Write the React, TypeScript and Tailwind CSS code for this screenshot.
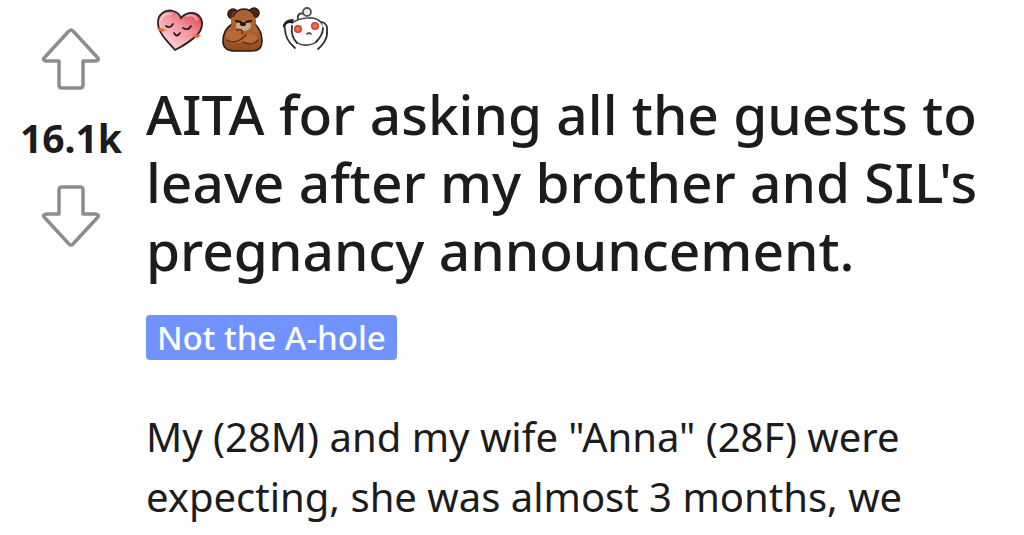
const ARROW_PATH =
  "M29 2 Q30 2 31 3 L55 29 Q57 31 56 32 Q55 33 53 33 H41 V57 Q41 60 38 60 H20 Q17 60 17 57 V33 H5 Q3 33 2 32 Q1 31 3 29 L27 3 Q28 2 29 2 Z";

function VoteArrow({ down = false }: { down?: boolean }) {
  return (
    <svg
      viewBox="0 0 58 62"
      className={down ? "h-[62px] w-[58px] rotate-180" : "h-[62px] w-[58px]"}
      fill="none"
      stroke="#8b8e90"
      strokeWidth={3.5}
      strokeLinejoin="round"
      aria-hidden="true"
    >
      <path d={ARROW_PATH} />
    </svg>
  );
}

function HeartAward() {
  return (
    <svg viewBox="0 0 60 60" className="size-[60px]" role="img" aria-label="Wholesome">
      <defs>
        <linearGradient id="heart" x1="0.9" y1="0.1" x2="0.3" y2="0.8">
          <stop offset="0" stopColor="#df4a55" />
          <stop offset="0.5" stopColor="#f3929c" />
          <stop offset="1" stopColor="#fbc6cd" />
        </linearGradient>
      </defs>
      <path
        d="M25 50C18 42 9 34 8 24C7 14 16 9 23 11C27 12 30 15 31 18C35 13 43 11 48 15C54 20 53 29 47 35C41 41 33 46 25 50Z"
        fill="url(#heart)"
        stroke="#2d2023"
        strokeWidth={1.8}
      />
      <path
        d="M11 20C12 15 17 13 21 14M37 16C41 14 46 16 47 20"
        fill="none"
        stroke="#fff"
        strokeWidth={2}
        opacity={0.45}
        strokeLinecap="round"
      />
      <path
        d="M16 26Q20 29 23 24M33 28Q38 31 41 26M24 33Q27 38 30 33"
        fill="none"
        stroke="#36151c"
        strokeWidth={1.8}
        strokeLinecap="round"
      />
      <path d="M7 28l5 0 4 2-4 2-4-2zM42 37l3-3 6 1-3 3z" fill="#f2673e" />
    </svg>
  );
}

function BearAward() {
  return (
    <svg viewBox="-1 0 60 60" className="size-[60px]" role="img" aria-label="Bear Hug">
      <defs>
        <linearGradient id="bearFur" x1="0" y1="0" x2="0" y2="1">
          <stop offset="0" stopColor="#b76a35" />
          <stop offset="1" stopColor="#8e4a20" />
        </linearGradient>
      </defs>
      <g stroke="#2c1a12" strokeWidth={1.6}>
        <circle cx="18" cy="14" r="5" fill="#4a2818" />
        <circle cx="39" cy="13" r="5" fill="#4a2818" />
        <path
          d="M17 24C11 28 8 34 8 41C8 48 12 51 20 51H37C44 51 47 48 47 41C47 34 44 28 40 24Z"
          fill="url(#bearFur)"
        />
      </g>
      <path d="M16 22C16 13 21 9 28 9C36 9 41 14 41 22C41 30 35 34 28 34C21 34 16 30 16 22Z" fill="#ad6231" />
      <path d="M18 17C20 12 24 9 29 9C34 9 38 12 40 17" fill="none" stroke="#2c1a12" strokeWidth={1.6} />
      <path d="M21 25C22 20 35 20 36 25C36 29 32 31 28 31C24 31 21 29 21 25Z" fill="#c9aa8c" />
      <path d="M21 21l5 1M36 21l-5 1" stroke="#20120d" strokeWidth={2} strokeLinecap="round" />
      <ellipse cx="28" cy="24" rx="3" ry="2" fill="#21150f" />
      {/* crossed arms, one paw up at the chin */}
      <path
        d="M11 36C11 31 18 29 23 30C28 29 31 32 28 35C34 32 40 33 43 38C43 44 34 45 27 42C19 45 12 43 11 36Z"
        fill="#b86b36"
      />
      <path
        d="M12 40C18 44 25 41 31 35M22 30C25 29 29 30 27 34M28 42C34 45 40 44 43 40"
        fill="none"
        stroke="#5e2e15"
        strokeWidth={1.5}
        strokeLinecap="round"
      />
    </svg>
  );
}

function SnooAward() {
  return (
    <svg viewBox="3 0 60 60" className="size-[60px]" role="img" aria-label="Facepalm">
      <defs>
        <radialGradient id="snooEye">
          <stop offset="0" stopColor="#f98a62" />
          <stop offset="1" stopColor="#cf321b" />
        </radialGradient>
      </defs>
      <path d="M23 19C22 15 25 12 29 14" fill="none" stroke="#343434" strokeWidth={1.8} />
      <circle cx="32" cy="12" r="4" fill="#e9e9e9" stroke="#555" strokeWidth={1.8} />
      <path
        d="M15 25C20 20 27 18 33 18C42 17 48 22 49 29C48 38 42 44 33 45C25 46 19 42 16 34Z"
        fill="#fff"
        stroke="#4a4a4a"
        strokeWidth={1.6}
      />
      <circle cx="23" cy="29" r="4" fill="url(#snooEye)" />
      <circle cx="40" cy="26" r="4" fill="url(#snooEye)" />
      <path d="M32 34Q34 32 36 34" fill="none" stroke="#353535" strokeWidth={1.6} strokeLinecap="round" />
      {/* arms raised on both sides of the head */}
      <path d="M18 21C11 20 8 24 10 29C10 37 14 43 20 48L23 43C18 39 16 33 16 26Z" fill="#fff" />
      <path d="M47 22C51 23 53 27 52 31C53 38 48 45 43 49L41 43C45 38 48 34 48 28Z" fill="#fff" />
      <g fill="none" stroke="#2f2f2f" strokeWidth={1.8} strokeLinecap="round">
        <path d="M18 20C11 20 8 24 10 29C10 37 14 43 20 48" />
        <path d="M17 26C16 33 18 39 22 43" />
        <path d="M47 22C51 23 53 27 52 31C53 38 48 45 43 49" />
        <path d="M48 28C48 34 45 38 41 42" />
      </g>
      <path d="M9 26Q11 21 17 22" fill="none" stroke="#1f1f1f" strokeWidth={2.5} strokeLinecap="round" />
    </svg>
  );
}

export default function App() {
  return (
    <main className="flex min-h-screen bg-white font-['Noto_Sans',sans-serif] text-[#1c1c1c]">
      {/* Votes */}
      <aside className="flex w-[142px] shrink-0 flex-col items-center gap-6 pt-7">
        <button type="button" aria-label="Upvote">
          <VoteArrow />
        </button>
        <span className="text-[39px]/[47px] font-bold">16.1k</span>
        <button type="button" aria-label="Downvote">
          <VoteArrow down />
        </button>
      </aside>

      <article className="min-w-0 flex-1 pr-8 pl-1">
        {/* Awards */}
        <div className="flex gap-1 pl-1">
          <HeartAward />
          <BearAward />
          <SnooAward />
        </div>

        <h1 className="mt-5 text-[55px]/[68px] font-medium">
          AITA for asking all the guests to leave after my brother and SIL's pregnancy announcement.
        </h1>

        <a
          href="#flair"
          className="mt-[31px] inline-block rounded-[4px] bg-[#7193ff] px-[11px] text-[33px]/[45px] font-medium text-white"
        >
          Not the A-hole
        </a>

        <p className="mt-[47px] text-[40px]/[60px]">
          My (28M) and my wife "Anna" (28F) were expecting, she was almost 3 months, we
        </p>
      </article>
    </main>
  );
}
